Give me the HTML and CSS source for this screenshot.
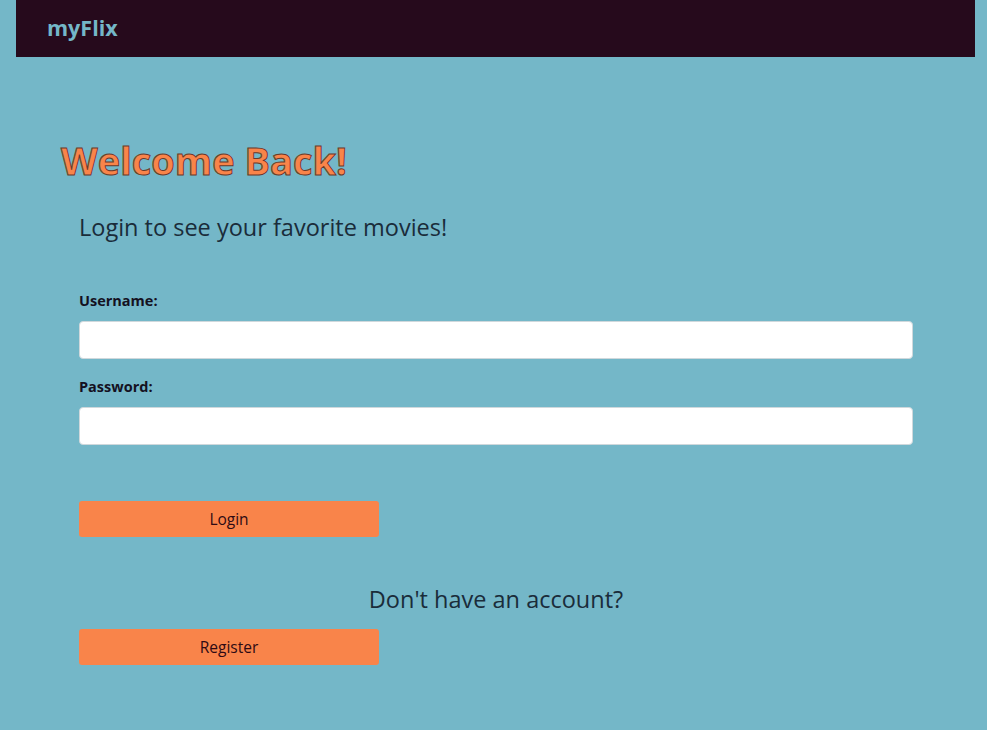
FILE: index.html
```html
<!DOCTYPE html>
<html>
<head>
<meta charset="utf-8">
<link rel="stylesheet" href="styles.css">
</head>
<body>
<nav class="navbar"><span class="brand">myFlix</span></nav>
<main class="page">
  <h1 class="welcome">Welcome Back!</h1>
  <form class="login-form">
    <h2 class="subtitle">Login to see your favorite movies!</h2>
    <label class="field">
      <span class="label">Username:</span>
      <input class="input" type="text">
    </label>
    <label class="field">
      <span class="label">Password:</span>
      <input class="input" type="password">
    </label>
    <button type="button" class="btn btn-login">Login</button>
    <p class="no-account">Don't have an account?</p>
    <button type="button" class="btn">Register</button>
  </form>
</main>
</body>
</html>
```
FILE: styles.css
```css
html, body {
  margin: 0;
  padding: 0;
  background: #74b7c8;
  height: 100%;
}
body {
  font-family: "Open Sans", "Noto Sans", sans-serif;
  color: #1b2e3c;
}
.navbar {
  margin: 0 12px 0 16px;
  height: 57px;
  background: #260a1c;
  display: flex;
  align-items: center;
  padding-left: 31px;
}
.brand {
  color: #74b7c8;
  font-size: 21.5px;
  font-weight: 700;
  margin-top: -3px;
}
.page {
  padding: 79px 0 0 61px;
}
.welcome {
  margin: 0;
  font-size: 38px;
  font-weight: 700;
  color: #f9844a;
  -webkit-text-stroke: 1px #6b3a2a;
  line-height: 48px;
}
.login-form {
  margin: 0;
  padding: 0 0 0 18px;
  width: 834px;
  display: flex;
  flex-direction: column;
}
.subtitle {
  margin: 27px 0 0;
  font-size: 23.5px;
  font-weight: 500;
  line-height: 32px;
  color: #1a2c3a;
}
.field {
  display: flex;
  flex-direction: column;
}
.field:first-of-type {
  margin-top: 48px;
}
.label {
  font-size: 14.5px;
  font-weight: 700;
  color: #14111f;
  line-height: 20px;
  margin-bottom: 10px;
}
.input {
  height: 38px;
  box-sizing: border-box;
  border: 1px solid #cfd8dc;
  border-radius: 4px;
  background: #fff;
  margin: 0 0 18px;
}
.btn {
  width: 300px;
  height: 36px;
  border: none;
  border-radius: 3px;
  background: #f9844a;
  color: #2e0a14;
  font-family: inherit;
  font-size: 15.5px;
  padding: 0;
}
.btn-login {
  margin-top: 38px;
}
.no-account {
  margin: 46px 0 14px;
  text-align: center;
  font-size: 23.5px;
  font-weight: 500;
  line-height: 32px;
  color: #1a2c3a;
}
```
